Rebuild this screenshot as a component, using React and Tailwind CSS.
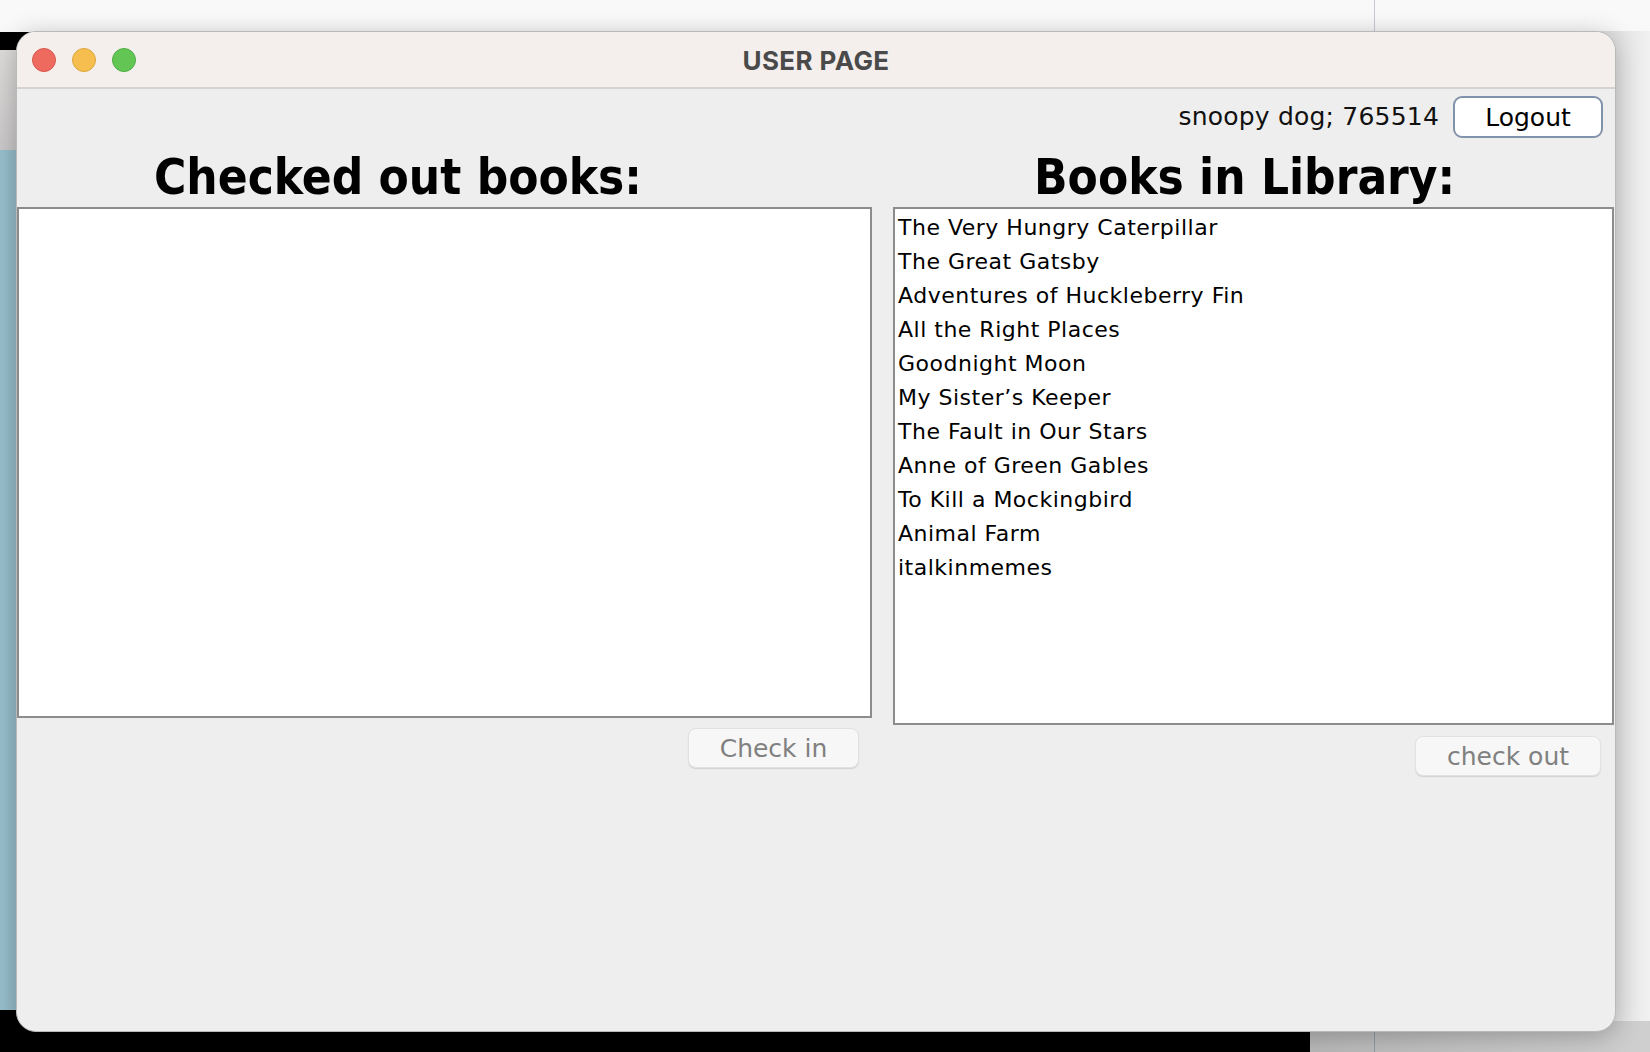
import React from "react";

const books = [
  "The Very Hungry Caterpillar",
  "The Great Gatsby",
  "Adventures of Huckleberry Fin",
  "All the Right Places",
  "Goodnight Moon",
  "My Sister\u2019s Keeper",
  "The Fault in Our Stars",
  "Anne of Green Gables",
  "To Kill a Mockingbird",
  "Animal Farm",
  "italkinmemes",
];

export default function App() {
  return (
    <div className="relative w-[1650px] h-[1052px] overflow-hidden bg-gradient-to-b from-[#f9f9f9] to-[#ececec] font-['DejaVu_Sans',sans-serif]">
      {/* desktop backdrop */}
      <div className="absolute left-0 top-[32px] w-[40px] h-[18px] bg-black" />
      <div className="absolute left-0 top-[50px] w-[40px] h-[100px] bg-gradient-to-b from-[#dedcdb] to-[#c9c7c7]" />
      <div className="absolute left-0 top-[150px] w-[40px] h-[860px] bg-gradient-to-r from-[#97bfcc] to-[#8fb6c3]" />
      <div className="absolute left-0 top-[1010px] w-[1310px] h-[42px] bg-black" />
      <div className="absolute left-[1310px] top-[1000px] w-[340px] h-[52px] bg-gradient-to-r from-[#b8b8b8] to-[#cfcfcf]" />
      <div className="absolute left-[1374px] top-0 w-px h-[31px] bg-[#c5cad2]" />
      <div className="absolute left-[1374px] top-[1032px] w-px h-[20px] bg-[#8f98a4]" />
      <div className="absolute left-[1596px] top-[31px] w-[54px] h-[990px] bg-gradient-to-r from-[#dadada] to-[#f1f1f1]" />

      {/* window */}
      <div className="relative z-10 ml-[16px] mt-[31px] w-[1600px] h-[1001px] rounded-[20px] overflow-hidden bg-[#eeeeee] border border-[#b9b9b9] shadow-[0_4px_24px_rgba(0,0,0,0.25)] flex flex-col">
        {/* title bar */}
        <div className="h-[57px] shrink-0 bg-[#f4efed] border-b-2 border-[#d5d2d0] grid grid-cols-[1fr_auto_1fr] items-center pt-[1px]">
          <div className="flex items-center gap-[16px] pl-[15px]">
            <span className="w-[24px] h-[24px] rounded-full bg-[#ee6a5f] border border-[#d8584d]" />
            <span className="w-[24px] h-[24px] rounded-full bg-[#f5be4f] border border-[#dca63b]" />
            <span className="w-[24px] h-[24px] rounded-full bg-[#62c554] border border-[#4fae42]" />
          </div>
          <div className="font-['Inter',sans-serif] font-bold text-[26px] text-[#4b4a4a] tracking-[0.4px]">
            USER PAGE
          </div>
          <div />
        </div>

        {/* content */}
        <div className="flex-1 flex flex-col">
          <div className="mt-[7px] h-[42px] flex justify-end items-center gap-[14px] pr-[12px]">
            <span className="text-[25px] text-[#111] tracking-[0.2px]">snoopy dog; 765514</span>
            <button className="w-[150px] h-[42px] rounded-[9px] border-2 border-[#8193aa] bg-white text-[25px] text-black leading-none">
              Logout
            </button>
          </div>

          <div className="flex gap-[21px] items-start">
            {/* left column */}
            <div className="w-[855px] flex flex-col">
              <div className="h-[69px] pt-[10px] pl-[137px] font-['DejaVu_Sans_Condensed','Open_Sans',sans-serif] font-bold text-[49px] leading-[60px] text-black">
                Checked out books:
              </div>
              <div className="h-[511px] bg-white border-2 border-[#8c8c8c]" />
              <button className="mt-[10px] self-end mr-[13px] w-[171px] h-[40px] rounded-[8px] bg-[#f7f7f7] border border-[#e2e2e2] shadow-[0_1px_1px_rgba(0,0,0,0.12)] text-[25px] text-[#808080] leading-none">
                Check in
              </button>
            </div>

            {/* right column */}
            <div className="w-[721px] flex flex-col">
              <div className="h-[69px] pt-[10px] pl-[141px] font-['DejaVu_Sans_Condensed','Open_Sans',sans-serif] font-bold text-[49px] leading-[60px] text-black">
                Books in Library:
              </div>
              <div className="h-[518px] bg-white border-2 border-[#8c8c8c] pl-[3px] pt-[2px]">
                {books.map((b) => (
                  <div key={b} className="text-[22px] leading-[34px] text-black tracking-[0.5px] whitespace-nowrap">
                    {b}
                  </div>
                ))}
              </div>
              <button className="mt-[11px] self-end mr-[13px] w-[186px] h-[40px] rounded-[8px] bg-[#f7f7f7] border border-[#e2e2e2] shadow-[0_1px_1px_rgba(0,0,0,0.12)] text-[25px] text-[#808080] leading-none">
                check out
              </button>
            </div>
          </div>
        </div>
      </div>
    </div>
  );
}
